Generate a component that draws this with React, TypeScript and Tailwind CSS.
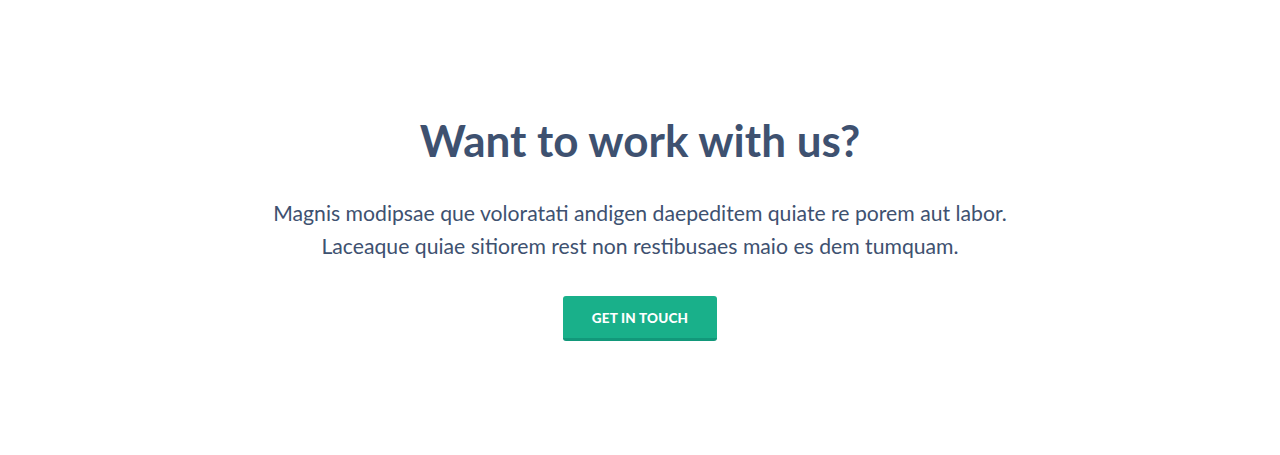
export default function App() {
  return (
    <div className="w-[1280px] h-[455px] bg-white flex flex-col items-center" style={{ fontFamily: "Lato, sans-serif" }}>
      <h1 className="mt-[112px] text-[44px] leading-[56px] font-bold text-[#3e5170]">Want to work with us?</h1>
      <p className="mt-[29px] text-center text-[21.2px] leading-[33px] text-[#3e5170]">
        Magnis modipsae que voloratati andigen daepeditem quiate re porem aut labor.
        <br />
        Laceaque quiae sitiorem rest non restibusaes maio es dem tumquam.
      </p>
      <button className="mt-[33px] w-[154px] h-[45px] pt-[2px] rounded-[3px] bg-[#19b08a] border-b-[3px] border-[#12987a] text-white text-[13.5px] font-black tracking-[0.2px]">
        GET IN TOUCH
      </button>
    </div>
  );
}
